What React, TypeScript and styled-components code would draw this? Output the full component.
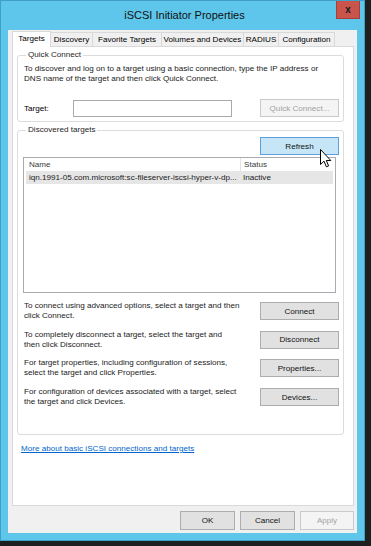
import React from 'react';
import styled, { createGlobalStyle } from 'styled-components';

const GlobalStyle = createGlobalStyle`
    html, body {
        margin: 0;
        padding: 0;
        background: #1f1f1f;
    }
    body {
        font-family: "Liberation Sans", Arial, sans-serif;
        font-size: 8.1px;
        color: #000;
    }
`;

const colors = {
    frame: '#5ec6ea',
    frameEdge: '#3f9fc6',
    client: '#f0f0f0',
    border: '#d9d9d9',
    group: '#dcdcdc',
    button: '#e1e1e1',
    buttonBorder: '#adadad',
    link: '#0066cc',
};

interface ITab {
    label: string;
    width: number;
}

interface IAction {
    lines: Array<string>;
    label: string;
}

const tabs: Array<ITab> = [
    { label: 'Targets', width: 39 },
    { label: 'Discovery', width: 43 },
    { label: 'Favorite Targets', width: 70 },
    { label: 'Volumes and Devices', width: 83 },
    { label: 'RADIUS', width: 36 },
    { label: 'Configuration', width: 57 },
];

const actions: Array<IAction> = [
    { lines: ['To connect using advanced options, select a target and then', 'click Connect.'], label: 'Connect' },
    { lines: ['To completely disconnect a target, select the target and', 'then click Disconnect.'], label: 'Disconnect' },
    { lines: ['For target properties, including configuration of sessions,', 'select the target and click Properties.'], label: 'Properties...' },
    { lines: ['For configuration of devices associated with a target, select', 'the target and click Devices.'], label: 'Devices...' },
];

const Screen = styled.div`
    width: 371px;
    height: 546px;
    overflow: hidden;
    background: #1f1f1f;
`;

const Window = styled.div`
    width: 365px;
    height: 541px;
    box-sizing: border-box;
    background: ${colors.frame};
    border: 1px solid ${colors.frameEdge};
    padding: 0 7px 7px 7px;
    display: flex;
    flex-direction: column;
`;

const TitleBar = styled.div`
    height: 29px;
    margin: 0 -7px;
    padding: 0 4px 0 8px;
    display: grid;
    grid-template-columns: 1fr auto 1fr;
    align-items: start;
`;

const Title = styled.div`
    grid-column: 2;
    font-size: 11px;
    line-height: 28px;
    color: #111;
    white-space: nowrap;
`;

const CloseButton = styled.div`
    grid-column: 3;
    justify-self: end;
    width: 24px;
    height: 18px;
    box-sizing: border-box;
    background: #c9544c;
    border: 1px solid #a8403a;
    border-top: none;
    display: flex;
    align-items: center;
    justify-content: center;
    font-size: 10px;
    font-weight: bold;
    color: #1a1a1a;
`;

const Client = styled.div`
    flex: 1;
    background: ${colors.client};
    padding: 1px 3px 0 4px;
    display: flex;
    flex-direction: column;
`;

const TabStrip = styled.div`
    height: 15px;
    display: flex;
    align-items: flex-end;
`;

const Tab = styled.div<{ $width: number; $selected?: boolean }>`
    width: ${p => p.$width}px;
    height: ${p => (p.$selected ? 16 : 14)}px;
    box-sizing: border-box;
    margin-left: -1px;
    margin-bottom: ${p => (p.$selected ? -1 : 0)}px;
    position: relative;
    z-index: ${p => (p.$selected ? 1 : 0)};
    border: 1px solid ${colors.border};
    border-bottom: none;
    background: ${p => (p.$selected ? '#fff' : colors.client)};
    text-align: center;
    line-height: ${p => (p.$selected ? 14 : 13)}px;
    white-space: nowrap;
    &:first-child {
        margin-left: 0;
    }
`;

const Panel = styled.div`
    height: 460px;
    box-sizing: border-box;
    background: #fff;
    border: 1px solid ${colors.border};
    padding: 2px 9px 0 4px;
    display: flex;
    flex-direction: column;
`;

const Group = styled.fieldset<{ $bottom: number }>`
    margin: 0;
    min-width: 0;
    border: 1px solid ${colors.group};
    border-radius: 3px;
    padding: 1px 4px ${p => p.$bottom}px 6px;
    & + & {
        margin-top: 2px;
    }
`;

const Legend = styled.legend`
    margin-left: 2px;
    padding: 0 2px;
    line-height: 12px;
    color: #1e1e1e;
`;

const Lines = styled.div`
    line-height: 10px;
    white-space: nowrap;
    color: #1a1a1a;
`;

const Description = styled(Lines)`
    margin-top: 2px;
`;

const TargetRow = styled.div`
    margin-top: 15px;
    display: flex;
    align-items: center;
`;

const FieldLabel = styled.span`
    width: 49px;
`;

const TextInput = styled.div`
    width: 159px;
    height: 17px;
    box-sizing: border-box;
    border: 1px solid #a9a9a9;
    background: #fff;
`;

const Button = styled.div<{ $width?: number; $state?: 'normal' | 'hot' | 'disabled' }>`
    width: ${p => p.$width || 79}px;
    height: 18px;
    box-sizing: border-box;
    flex-shrink: 0;
    display: flex;
    align-items: center;
    justify-content: center;
    white-space: nowrap;
    border: 1px solid ${p => (p.$state === 'hot' ? '#5c9fdc' : p.$state === 'disabled' ? '#cacaca' : colors.buttonBorder)};
    background: ${p => (p.$state === 'hot' ? '#c6e6f8' : p.$state === 'disabled' ? '#f4f4f4' : colors.button)};
    color: ${p => (p.$state === 'disabled' ? '#a2a2a2' : '#111')};
`;

const PushRight = styled.div`
    margin-left: auto;
`;

const RefreshRow = styled.div`
    position: relative;
    display: flex;
    justify-content: flex-end;
`;

const Cursor = styled.svg`
    position: absolute;
    left: 296px;
    top: 12px;
`;

const TargetList = styled.div`
    margin: 2px 3px 0 -1px;
    height: 136px;
    box-sizing: border-box;
    border: 1px solid #a9abb0;
    background: #fff;
    padding: 0 2px;
`;

const ListRow = styled.div<{ $header?: boolean }>`
    height: 13px;
    display: grid;
    grid-template-columns: 214px 1fr;
    line-height: 13px;
    white-space: nowrap;
    background: ${p => (p.$header ? '#fff' : '#e6e6e6')};
    color: ${p => (p.$header ? '#3b3b3b' : '#1a1a1a')};
`;

const Cell = styled.div<{ $divider?: boolean }>`
    padding-left: 3px;
    border-left: ${p => (p.$divider ? '1px solid #e3e3e3' : 'none')};
`;

const Actions = styled.div`
    margin-top: 8px;
    display: flex;
    flex-direction: column;
    gap: 8.7px;
`;

const ActionRow = styled.div`
    height: 20px;
    display: flex;
    align-items: center;
    justify-content: space-between;
`;

const HelpLink = styled.div`
    margin: 9px 0 0 4px;
    line-height: 10px;
    color: ${colors.link};
    text-decoration: underline;
`;

const DialogButtons = styled.div`
    padding-top: 5px;
    display: flex;
    justify-content: flex-end;
    gap: 5px;
    & > div {
        height: 19px;
    }
`;

const App = () => {
    return (
        <Screen>
            <GlobalStyle />
            <Window>
                <TitleBar>
                    <Title>iSCSI Initiator Properties</Title>
                    <CloseButton>x</CloseButton>
                </TitleBar>
                <Client>
                    <TabStrip>
                        {tabs.map((tab, i) => (
                            <Tab key={i} $width={tab.width} $selected={i === 0}>{tab.label}</Tab>
                        ))}
                    </TabStrip>
                    <Panel>
                        <Group $bottom={4}>
                            <Legend>Quick Connect</Legend>
                            <Description>
                                <div>To discover and log on to a target using a basic connection, type the IP address or</div>
                                <div>DNS name of the target and then click Quick Connect.</div>
                            </Description>
                            <TargetRow>
                                <FieldLabel>Target:</FieldLabel>
                                <TextInput />
                                <PushRight>
                                    <Button $state="disabled">Quick Connect...</Button>
                                </PushRight>
                            </TargetRow>
                        </Group>
                        <Group $bottom={27}>
                            <Legend>Discovered targets</Legend>
                            <RefreshRow>
                                <Button $state="hot">Refresh</Button>
                                <Cursor width="12" height="19" viewBox="0 0 12 19">
                                    <path d="M0.5 0.5 L0.5 15.5 L4 12.2 L6.4 17.8 L8.6 16.9 L6.3 11.5 L10.8 11.5 Z" fill="#fff" stroke="#000" strokeWidth="1" strokeLinejoin="round" />
                                </Cursor>
                            </RefreshRow>
                            <TargetList>
                                <ListRow $header>
                                    <Cell>Name</Cell>
                                    <Cell $divider>Status</Cell>
                                </ListRow>
                                <ListRow>
                                    <Cell>iqn.1991-05.com.microsoft:sc-fileserver-iscsi-hyper-v-dp...</Cell>
                                    <Cell>Inactive</Cell>
                                </ListRow>
                            </TargetList>
                            <Actions>
                                {actions.map((action, i) => (
                                    <ActionRow key={i}>
                                        <Lines>
                                            {action.lines.map((line, j) => <div key={j}>{line}</div>)}
                                        </Lines>
                                        <Button>{action.label}</Button>
                                    </ActionRow>
                                ))}
                            </Actions>
                        </Group>
                        <HelpLink>More about basic iSCSI connections and targets</HelpLink>
                    </Panel>
                    <DialogButtons>
                        <Button $width={55}>OK</Button>
                        <Button $width={55}>Cancel</Button>
                        <Button $width={54} $state="disabled">Apply</Button>
                    </DialogButtons>
                </Client>
            </Window>
        </Screen>
    );
};

export default App;
